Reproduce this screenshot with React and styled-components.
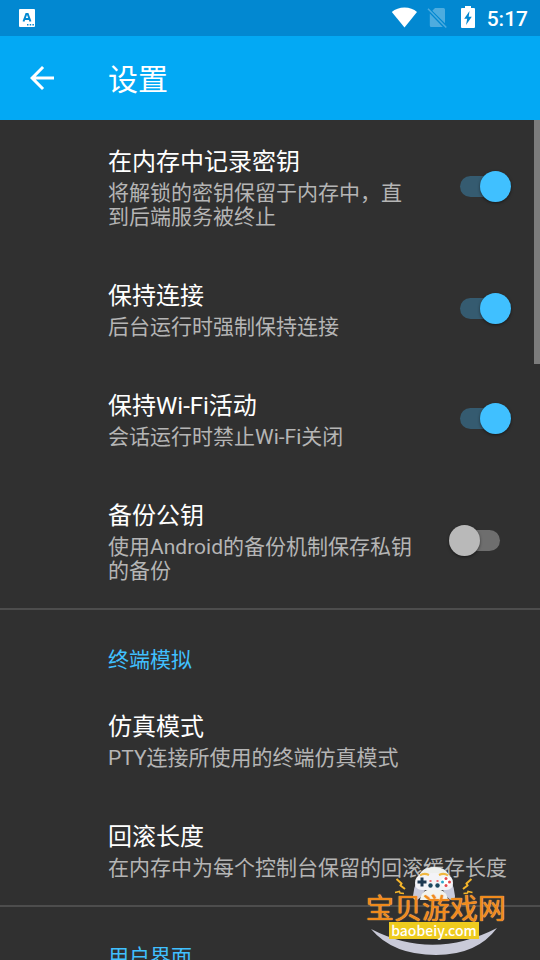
import React, { useState } from "react"
import styled, { createGlobalStyle } from "styled-components"

const color_status = "#0288d1"
const color_primary = "#03a9f4"
const color_background = "#303030"
const color_accent = "#40c0ff"
const color_divider = "#4d4d4d"
const font_stack = `Roboto, "Noto Sans CJK SC", sans-serif`

const GlobalStyle = createGlobalStyle`
  * {
    box-sizing: border-box;
  }

  body {
    margin: 0;
    background: ${color_background};
    color: white;
    font-family: ${font_stack};
  }
`

const Page = styled.div`
  position: relative;
  display: flex;
  flex-direction: column;
  height: 100vh;
  overflow: hidden;
`

const StatusBar = styled.div`
  display: flex;
  flex: none;
  align-items: center;
  justify-content: space-between;
  height: 36px;
  padding: 0 12px 0 19px;
  background: ${color_status};
`

const StatusIcons = styled.div`
  display: flex;
  align-items: center;
  gap: 10px;

  svg {
    display: block;
    margin-bottom: 2px;
  }
`

const Clock = styled.time`
  margin-left: 2px;
  padding-top: 1px;
  font-size: 21px;
  font-weight: 500;
  line-height: 36px;
`

const AppBar = styled.header`
  display: flex;
  flex: none;
  align-items: center;
  height: 84px;
  padding-left: 24px;
  background: ${color_primary};
`

const BackButton = styled.button`
  width: 36px;
  height: 36px;
  margin-right: 48px;
  padding: 0;
  border: 0;
  background: none;
  color: white;

  svg {
    display: block;
  }
`

const AppTitle = styled.h1`
  margin: 0;
  padding-top: 4px;
  font-size: 30px;
  font-weight: 400;
  line-height: 40px;
`

const Content = styled.main`
  position: relative;
  flex: 1;
  min-height: 0;
  overflow: hidden;
`

const ScrollThumb = styled.div`
  position: absolute;
  top: 0;
  right: 0;
  width: 6px;
  height: 29%;
  background: #7c7c7c;
`

const Section = styled.section`
  & + & {
    border-top: 2px solid ${color_divider};
  }
`

const SectionTitle = styled.h2`
  margin: 0;
  padding: 38px 24px 13px 108px;
  font-size: 21px;
  font-weight: 400;
  line-height: 24px;
  color: ${color_accent};
`

const Preference = styled.label`
  display: flex;
  align-items: center;
  padding: 24px 24px 25px 108px;
`

const PreferenceText = styled.div`
  flex: 1;
  min-width: 0;
`

const PreferenceTitle = styled.div`
  margin-bottom: 1px;
  font-size: 24px;
  line-height: 36px;
`

const PreferenceSummary = styled.div`
  font-size: 21px;
  line-height: 24px;
  color: #b5b5b5;
`

const Switch = styled.input`
  appearance: none;
  position: relative;
  flex: none;
  width: 72px;
  height: 36px;
  margin: 0 0 0 24px;

  &::before {
    content: "";
    position: absolute;
    top: 7px;
    left: 16px;
    width: 40px;
    height: 21px;
    border-radius: 11px;
    background: ${(props) => (props.checked ? "#355b70" : "#6e6e6e")};
  }

  &::after {
    content: "";
    position: absolute;
    top: 2px;
    left: ${(props) => (props.checked ? "36px" : "5px")};
    width: 31px;
    height: 31px;
    border-radius: 50%;
    background: ${(props) => (props.checked ? color_accent : "#b9b9b9")};
    box-shadow: 0 1px 3px rgba(0, 0, 0, 0.5);
  }
`

const Brand = styled.div`
  position: absolute;
  right: 34px;
  bottom: 4px;
  display: flex;
  flex-direction: column;
  align-items: center;
  width: 140px;
  height: 90px;
  padding-top: 32px;
  pointer-events: none;

  svg {
    position: absolute;
    inset: 0;
  }
`

const BrandName = styled.span`
  position: relative;
  font-size: 28px;
  font-weight: 400;
  line-height: 24px;
  color: #f08a1c;
  white-space: nowrap;
  text-shadow: 0 0 1px #f5b060, 0 0 1px #f5b060;
`

const BrandSite = styled.span`
  position: relative;
  margin-right: 4px;
  padding: 0 2px;
  font-family: "Noto Sans CJK SC", sans-serif;
  font-size: 14px;
  font-weight: 500;
  line-height: 17px;
  color: white;
  background: #eecb1e;
`

const NotificationIcon = () => (
  <svg width="16" height="18" viewBox="0 0 16 18" aria-hidden="true">
    <rect width="16" height="18" rx="1" fill="white" />
    <path
      d="M4.5 12.5 7.3 5h1.4l2.8 7.5M5.6 10h4.8"
      fill="none"
      stroke={color_status}
      strokeWidth="2"
    />
    <path d="M8 15h1.500v1.500H8zM10.700 15h1.500v1.500h-1.500zM13.400 15h1.500v1.500h-1.500z" fill={color_status} />
  </svg>
)

const WifiIcon = () => (
  <svg width="26" height="22" viewBox="0 0 26 22" aria-hidden="true">
    <path d="M13.500 21.500.8 6C4.200 3 8.500 1.500 13.500 1.500S22.800 3 26 6z" fill="white" />
  </svg>
)

const NoSimIcon = () => (
  <svg width="24" height="22" viewBox="0 0 24 22" aria-hidden="true">
    <path d="M8 2h8.500q1.500 0 1.500 1.500v13.700L5.300 4.700zM2.800 7.500 15.800 21H4.300q-1.500 0-1.500-1.500z" fill="#4dacdf" />
    <path d="M1 2.700 19.300 21.500" stroke="#4dacdf" strokeWidth="1.500" />
  </svg>
)

const BatteryIcon = () => (
  <svg width="14" height="22" viewBox="0 0 14 22" aria-hidden="true">
    <path d="M4 0h6v2h3q1 0 1 1v18q0 1-1 1H1q-1 0-1-1V3q0-1 1-1h3z" fill="white" />
    <path d="M8.500 5 3.200 12.700h3L5 19l5.800-8.200H7.700z" fill={color_status} />
  </svg>
)

const BackIcon = () => (
  <svg width="36" height="36" viewBox="0 0 24 24" aria-hidden="true">
    <path
      d="M20 11H7.830l5.590-5.590L12 4l-8 8 8 8 1.410-1.410L7.830 13H20v-2z"
      fill="currentColor"
    />
  </svg>
)

const BrandDrawing = () => (
  <svg width="140" height="90" viewBox="366 866 140 90" aria-hidden="true">
    <path d="M418 878q3-11 16-11t16 11z" fill="#eef0ee" />
    <path
      d="M417 880h34q3 7 4 16 0 4-3 4-3 0-6-5l-3-5h-18l-3 5q-3 5-6 5-3 0-3-4 1-9 4-16z"
      fill="#c9cbdc"
    />
    <path d="M420 900q1-11 14-11t14 11z" fill="#f2f3ef" />
    <path
      d="M422 874q12-2 24 0 7 2 7 9 0 7-7 7h-24q-7 0-7-7 0-7 7-9z"
      fill="#f3f3f7"
    />
    <path d="M420 875.500q4-3 9-.5M439 875q5-2.500 9 .5" stroke="#f0b73f" strokeWidth="2" fill="none" />
    <path d="M422 877.500v9M417.500 882h9" stroke="#1d3850" strokeWidth="3" />
    <circle cx="446" cy="882" r="5" fill="white" />
    <circle cx="446" cy="878.500" r="1.500" fill="#e5484d" />
    <circle cx="446" cy="885.500" r="1.500" fill="#e5484d" />
    <circle cx="442.500" cy="882" r="1.500" fill="#2fa6c9" />
    <circle cx="449.500" cy="882" r="1.500" fill="#e5484d" />
    <circle cx="430.500" cy="885.500" r="2.200" fill="#1c4860" />
    <circle cx="437.500" cy="885.500" r="2.200" fill="#1c4860" />
    <path d="M429.500 881h2M436.500 881h2" stroke="#e5484d" strokeWidth="1.500" />
    <path
      d="M396.500 879l5 4.500-1 2 4.500 3.500M471.500 879l-5 4.500 1 2-4.500 3.500"
      fill="none"
      stroke="#f5b52a"
      strokeWidth="2"
    />
    <path
      d="M395 892.500l4.500-1 .5 1.500 4 .5M472.500 892.500l-4.500-1-.5 1.500-4 .5"
      fill="none"
      stroke="#f5b52a"
      strokeWidth="1.500"
    />
    <path d="M371 929q62 32 126-1-20 27-61 27-43 0-65-26z" fill="#c9cad8" />
  </svg>
)

const initial_preferences = [
  {
    id: "memkeys",
    title: "在内存中记录密钥",
    summary: "将解锁的密钥保留于内存中，直到后端服务被终止",
    checked: true,
  },
  { id: "connpersist", title: "保持连接", summary: "后台运行时强制保持连接", checked: true },
  { id: "wifilock", title: "保持Wi-Fi活动", summary: "会话运行时禁止Wi-Fi关闭", checked: true },
  {
    id: "backupkeys",
    title: "备份公钥",
    summary: "使用Android的备份机制保存私钥的备份",
    checked: false,
  },
]

const terminal_preferences = [
  { id: "emulation", title: "仿真模式", summary: "PTY连接所使用的终端仿真模式" },
  { id: "scrollback", title: "回滚长度", summary: "在内存中为每个控制台保留的回滚缓存长度" },
]

const App = () => {
  const [preferences, setPreferences] = useState(initial_preferences)

  const toggle = (id) =>
    setPreferences(preferences.map((p) => (p.id === id ? { ...p, checked: !p.checked } : p)))

  return (
    <>
      <GlobalStyle />
      <Page>
        <StatusBar>
          <NotificationIcon />
          <StatusIcons>
            <WifiIcon />
            <NoSimIcon />
            <BatteryIcon />
            <Clock>5:17</Clock>
          </StatusIcons>
        </StatusBar>
        <AppBar>
          <BackButton type="button" aria-label="返回">
            <BackIcon />
          </BackButton>
          <AppTitle>设置</AppTitle>
        </AppBar>
        <Content>
          <Section>
            {preferences.map((p) => (
              <Preference key={p.id}>
                <PreferenceText>
                  <PreferenceTitle>{p.title}</PreferenceTitle>
                  <PreferenceSummary>{p.summary}</PreferenceSummary>
                </PreferenceText>
                <Switch type="checkbox" checked={p.checked} onChange={() => toggle(p.id)} />
              </Preference>
            ))}
          </Section>
          <Section>
            <SectionTitle>终端模拟</SectionTitle>
            {terminal_preferences.map((p) => (
              <Preference as="div" key={p.id}>
                <PreferenceText>
                  <PreferenceTitle>{p.title}</PreferenceTitle>
                  <PreferenceSummary>{p.summary}</PreferenceSummary>
                </PreferenceText>
              </Preference>
            ))}
          </Section>
          <Section>
            <SectionTitle>用户界面</SectionTitle>
          </Section>
          <ScrollThumb />
        </Content>
        <Brand>
          <BrandDrawing />
          <BrandName>宝贝游戏网</BrandName>
          <BrandSite>baobeiy.com</BrandSite>
        </Brand>
      </Page>
    </>
  )
}

export default App
